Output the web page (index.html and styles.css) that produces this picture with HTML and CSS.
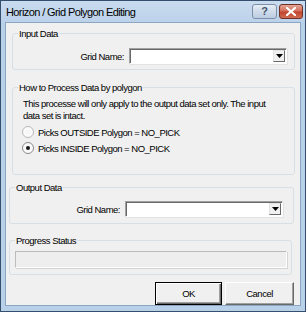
FILE: index.html
```html
<!DOCTYPE html>
<html lang="en">
<head>
    <meta charset="UTF-8">
    <title>Horizon / Grid Polygon Editing</title>
    <link rel="stylesheet" href="styles.css">
</head>
<body>
    <div class="window">
        <div class="titlebar">
            <span class="title">Horizon / Grid Polygon Editing</span>
            <div class="caption-buttons">
                <div class="cap cap-help">?</div>
                <div class="cap cap-close">
                    <svg width="10" height="9" viewBox="0 0 10 9">
                        <path d="M1 1 L9 8 M9 1 L1 8" stroke="#fff" stroke-width="2.2" stroke-linecap="square"/>
                    </svg>
                </div>
            </div>
        </div>

        <div class="client">
            <fieldset class="group group-input">
                <legend>Input Data</legend>
                <div class="field-row">
                    <span class="field-label">Grid Name:</span>
                    <div class="combo">
                        <span class="combo-text"></span>
                        <span class="combo-btn">
                            <svg width="7" height="4" viewBox="0 0 7 4"><path d="M0 0 H7 L3.5 4 Z" fill="#000"/></svg>
                        </span>
                    </div>
                </div>
            </fieldset>

            <fieldset class="group group-process">
                <legend>How to Process Data by polygon</legend>
                <p class="note">This processe will only apply to the output data set only. The input data set is intact.</p>
                <div class="radio-row">
                    <span class="radio radio-off"></span>
                    <span>Picks OUTSIDE Polygon = NO_PICK</span>
                </div>
                <div class="radio-row">
                    <span class="radio radio-on"></span>
                    <span>Picks INSIDE Polygon = NO_PICK</span>
                </div>
            </fieldset>

            <fieldset class="group group-output">
                <legend>Output Data</legend>
                <div class="field-row">
                    <span class="field-label">Grid Name:</span>
                    <div class="combo">
                        <span class="combo-text"></span>
                        <span class="combo-btn">
                            <svg width="7" height="4" viewBox="0 0 7 4"><path d="M0 0 H7 L3.5 4 Z" fill="#000"/></svg>
                        </span>
                    </div>
                </div>
            </fieldset>

            <fieldset class="group group-progress">
                <legend>Progress Status</legend>
                <div class="progress"></div>
            </fieldset>

            <div class="button-row">
                <div class="btn btn-default">OK</div>
                <div class="btn">Cancel</div>
            </div>
        </div>
    </div>
</body>
</html>
```

FILE: styles.css
```css
* {
    margin: 0;
    padding: 0;
    box-sizing: border-box;
}

/* MS Sans Serif is much narrower than Arial, so tighten Liberation Sans */
body {
    font-family: 'Liberation Sans', Arial, sans-serif;
    font-size: 9.5px;
    letter-spacing: -0.5px;
    color: #000;
    background: #fff;
}

.window {
    width: 306px;
    height: 312px;
    display: flex;
    flex-direction: column;
    border: 1px solid #34506e;
    background: #b9d0e9;
    padding: 0 4px 5px 4px;
}

/* Title bar */
.titlebar {
    height: 21px;
    display: flex;
    align-items: center;
    justify-content: space-between;
    background: linear-gradient(180deg, #c9dbef 0%, #bcd2ea 100%);
    margin: 0 -4px;
    padding: 0 2px 0 5px;
}

.title {
    font-size: 11px;
    letter-spacing: -0.6px;
    color: #000;
    padding-top: 1px;
}

.caption-buttons {
    display: flex;
    gap: 2px;
    align-self: flex-start;
    margin-top: 3px;
}

.cap {
    height: 15px;
    border-radius: 3px;
    display: flex;
    align-items: center;
    justify-content: center;
}

.cap-help {
    width: 25px;
    border: 1px solid #7d8fa6;
    background: linear-gradient(180deg, #e6edf6 0%, #cfdbea 50%, #bccde2 100%);
    color: #44536a;
    font-size: 11px;
    letter-spacing: 0;
    font-weight: bold;
    line-height: 13px;
}

.cap-close {
    width: 24px;
    border: 1px solid #6f3026;
    background: linear-gradient(180deg, #e5a595 0%, #d2705c 45%, #c2432d 55%, #d06d55 100%);
}

/* Client area */
.client {
    flex: 1;
    display: flex;
    flex-direction: column;
    background: #f0f0f0;
    border: 1px solid #8ba6c3;
}

.group {
    border: 1px solid #d5dfe5;
    border-radius: 3px;
    padding: 0 5px;
    min-width: 0;
}

.group legend {
    padding: 0 1px;
    line-height: 13px;
    color: #000;
}

.group-input {
    margin: 4px 0 0 6px;
    width: 283px;
    padding-top: 8px;
    padding-bottom: 5px;
}

.group-process {
    margin: 11px 0 0 6px;
    width: 283px;
    padding-top: 4px;
    padding-bottom: 18px;
}

.group-output {
    margin: 6px 0 0 3px;
    width: 285px;
    padding-top: 7px;
    padding-bottom: 6px;
}

.group-progress {
    margin: 10px 0 0 3px;
    width: 283px;
    padding-top: 4px;
    padding-bottom: 6px;
}

.field-row {
    display: flex;
    align-items: center;
    justify-content: flex-end;
    gap: 5px;
    height: 16px;
}

.group-input .field-row {
    padding-right: 2px;
}

.group-output .field-row {
    padding-right: 5px;
}

.combo {
    width: 158px;
    height: 16px;
    display: flex;
    justify-content: space-between;
    background: #fff;
    border-top: 1px solid #a0a0a0;
    border-left: 1px solid #a0a0a0;
    border-right: 1px solid #fff;
    border-bottom: 1px solid #fff;
    box-shadow: inset 1px 1px 0 #696969, 1px 1px 0 #e3e3e3;
}

.combo-btn {
    width: 12px;
    height: 12px;
    margin: 1px 1px 0 0;
    display: flex;
    align-items: center;
    justify-content: center;
    background: #f0f0f0;
    border-top: 1px solid #e3e3e3;
    border-left: 1px solid #e3e3e3;
    border-right: 1px solid #696969;
    border-bottom: 1px solid #696969;
}

.note {
    line-height: 12px;
    padding-left: 5px;
    padding-right: 8px;
}

.radio-row {
    display: flex;
    align-items: center;
    gap: 4px;
    height: 16px;
    padding-left: 4px;
}

.group-process .note + .radio-row {
    margin-top: 2px;
}

.radio {
    width: 12px;
    height: 12px;
    border-radius: 50%;
    border: 1px solid #b8b8b8;
    background: radial-gradient(circle, #f4f4f4 0%, #fff 100%);
    display: flex;
    align-items: center;
    justify-content: center;
}

.radio-on {
    border-color: #8a8a8a;
}

.radio-on::after {
    content: "";
    width: 4px;
    height: 4px;
    border-radius: 50%;
    background: #1a1a1a;
}

.progress {
    width: 272px;
    height: 17px;
    background: #eeeeee;
    border: 1px solid #bcbcbc;
    border-right-color: #fff;
    border-bottom-color: #fff;
    box-shadow: 1px 1px 0 #d4d4d4;
}

/* Buttons */
.button-row {
    display: flex;
    gap: 3px;
    margin: 7px 0 0 149px;
}

.btn {
    height: 23px;
    width: 69px;
    display: flex;
    align-items: center;
    justify-content: center;
    background: #f0f0f0;
    border-top: 1px solid #fff;
    border-left: 1px solid #fff;
    border-right: 1px solid #696969;
    border-bottom: 1px solid #696969;
    box-shadow: inset -1px -1px 0 #a0a0a0;
}

.btn-default {
    width: 67px;
    border: 1px solid #000;
    box-shadow: inset 1px 1px 0 #fff, inset -1px -1px 0 #696969, inset -2px -2px 0 #a0a0a0;
}
```
